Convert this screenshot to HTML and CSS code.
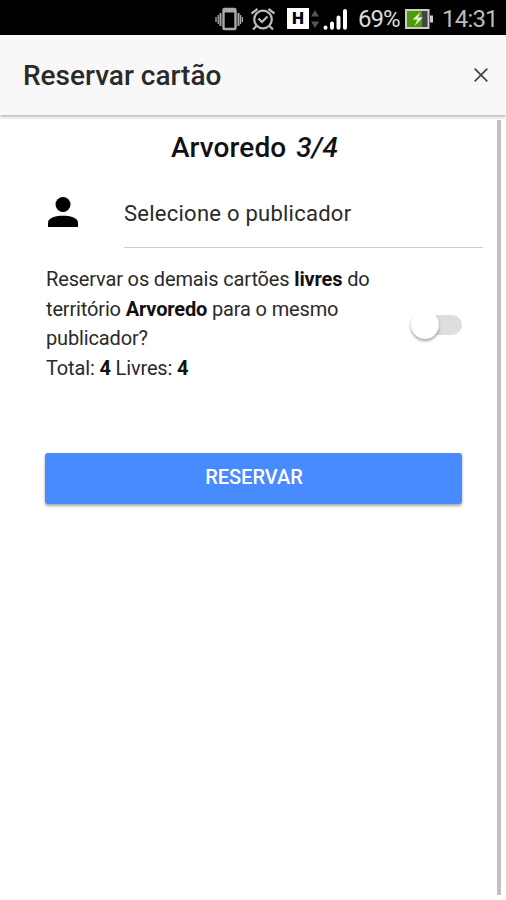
FILE: index.html
```html
<!DOCTYPE html>
<html lang="pt-BR">
<head>
  <meta charset="UTF-8" />
  <meta name="viewport" content="width=device-width, initial-scale=1.0"/>
  <title>Reservar cartão</title>
  <link rel="stylesheet" href="styles.css">
</head>
<body>

  <div class="status-bar">
    <svg class="icon-vibrate" width="28" height="24" viewBox="0 0 28 24" fill="none" stroke="#aaa">
      <rect x="8.5" y="2" width="12" height="20" rx="1" stroke-width="2.4"/>
      <path d="M8 4h13" stroke-width="3"/>
      <path d="M5.5 6v13M23.5 6v13" stroke-width="2"/>
      <path d="M3.2 8v9M25.6 8v9M1 10v5M27.5 10v5" stroke-width="1.3"/>
    </svg>
    <svg class="icon-alarm" width="26" height="24" viewBox="0 0 26 24" fill="none" stroke="#bbb" stroke-width="2.2">
      <circle cx="13" cy="12.5" r="8.8"/>
      <path d="M1.5 6.5l6-4.5M24.5 6.5l-6-4.5M6.5 19L3 22.5M19.5 19l3.5 3.5"/>
      <path d="M8.5 11.5L12 15l5.5-5.5"/>
    </svg>
    <span class="network">H</span>
    <svg class="icon-data" width="8" height="18" viewBox="0 0 8 18" fill="#555">
      <path d="M4 0l4 6.5H0zM4 18l4-6.5H0z"/>
    </svg>
    <svg class="icon-signal" width="25" height="22" viewBox="0 0 25 22" stroke="#fff" stroke-width="4" stroke-linecap="round">
      <path d="M2.5 19.5v.3M9 15.5v4.3M15.500 9.500v10.300M22 3v16.800"/>
    </svg>
    <span class="percent">69%</span>
    <svg class="icon-battery" width="28" height="20" viewBox="0 0 28 20">
      <rect x="1" y="1" width="22.5" height="18" fill="#444" stroke="#ccc" stroke-width="2"/>
      <path d="M2 2h15v16H2z" fill="#4f9a0b"/>
      <path d="M25 6.5h3v7h-3z" fill="#ccc"/>
      <path d="M15.5 3l-8 7.500h5l-3 6.500 8.500-8.500h-5z" fill="#e3f0d8"/>
    </svg>
    <span class="clock">14:31</span>
  </div>

  <div class="header">
    <h1>Reservar cartão</h1>
    <button class="close" aria-label="Fechar">
      <svg width="14" height="14" viewBox="0 0 14 14" stroke="#444" stroke-width="1.7">
        <path d="M.7.7l12.600 12.600M13.300.7L.7 13.300"/>
      </svg>
    </button>
  </div>

  <div class="content">
    <div class="page">
      <h2>Arvoredo <em>3/4</em></h2>

      <div class="publisher">
        <svg width="30" height="30" viewBox="0 0 30 30">
          <circle cx="15" cy="7.5" r="7.5"/>
          <path d="M0 30v-4.500C0 20.500 8.500 18.700 15 18.700s15 1.800 15 6.800V30z"/>
        </svg>
        <div class="select">Selecione o publicador</div>
      </div>

      <div class="others">
        <p>Reservar os demais cartões <b>livres</b> do<br>
          território <b>Arvoredo</b> para o mesmo<br>
          publicador?<br>
          Total: <b>4</b> Livres: <b>4</b></p>
        <div class="toggle"><span class="knob"></span></div>
      </div>

      <button class="btn">RESERVAR</button>
    </div>
    <div class="scrollbar"></div>
  </div>

</body>
</html>
```
FILE: styles.css
```css
* {
  box-sizing: border-box;
}

body {
  margin: 0;
  height: 900px;
  overflow: hidden;
  display: flex;
  flex-direction: column;
  font-family: Roboto, sans-serif;
  background: #fff;
  color: #2a2a2a;
}

h1, h2, p {
  margin: 0;
}

.status-bar {
  height: 35px;
  flex: none;
  display: flex;
  align-items: center;
  padding: 2px 0 0 215px;
  background: #000;
  color: #ccc;
}

.icon-alarm {
  margin-left: 7px;
}

.network {
  width: 22px;
  height: 21px;
  margin: 0 2px 0 11px;
  background: #fff;
  color: #000;
  font-size: 17px;
  line-height: 21px;
  font-weight: 900;
  text-align: center;
}

.icon-signal {
  margin-left: 4px;
}

.percent {
  width: 42px;
  margin: 0 5px 0 10px;
  font-size: 24px;
  letter-spacing: -1px;
  color: #ddd;
}

.clock {
  margin-left: 9px;
  font-size: 24px;
  letter-spacing: -0.8px;
  color: #bbb;
}

.header {
  height: 80px;
  flex: none;
  display: flex;
  align-items: center;
  justify-content: space-between;
  padding: 0 18px 0 23px;
  background: #f8f8f8;
  box-shadow: 0 2px 3px rgba(0, 0, 0, 0.27);
}

.header h1 {
  font-size: 28px;
  font-weight: 500;
}

.close {
  display: flex;
  padding: 0;
  border: none;
  background: none;
}

.content {
  flex: 1;
  display: flex;
  justify-content: space-between;
  padding: 5px 5px 5px 0;
}

.page {
  width: 483px;
}

.scrollbar {
  width: 4px;
  background: #c0c0c0;
}

.page h2 {
  padding-left: 26px;
  margin-top: 11px;
  font-size: 28px;
  line-height: 34px;
  font-weight: 500;
  word-spacing: 3px;
  letter-spacing: 0.1px;
  text-align: center;
  color: #111;
}

.publisher {
  display: flex;
  align-items: flex-end;
  height: 83px;
  padding-left: 48px;
}

.publisher svg {
  margin-bottom: 21px;
}

.select {
  flex: 1;
  height: 83px;
  margin-left: 46px;
  border-bottom: 1px solid #ccc;
  font-size: 22px;
  line-height: 98px;
  letter-spacing: 0.25px;
}

.others {
  display: flex;
  align-items: center;
  justify-content: space-between;
  padding: 17px 21px 0 46px;
}

.others p {
  font-size: 20px;
  line-height: 29.6px;
  letter-spacing: -0.15px;
}

.others b {
  color: #111;
}

.toggle {
  width: 47px;
  height: 20px;
  margin-top: 2px;
  border-radius: 10px;
  background: #dedede;
}

.knob {
  display: block;
  width: 28px;
  height: 28px;
  margin: -4px 0 0 -4px;
  border-radius: 50%;
  background: #fff;
  box-shadow: 0 2px 3px rgba(0, 0, 0, 0.35);
}

.btn {
  display: block;
  width: 417px;
  height: 51px;
  margin: 70px 0 0 45px;
  padding: 0 0 3px 1px;
  border: none;
  border-radius: 3px;
  background: #488aff;
  color: #fff;
  font-family: inherit;
  font-size: 20px;
  font-weight: 500;
  box-shadow: 0 2px 3px rgba(0, 0, 0, 0.35);
}
```
